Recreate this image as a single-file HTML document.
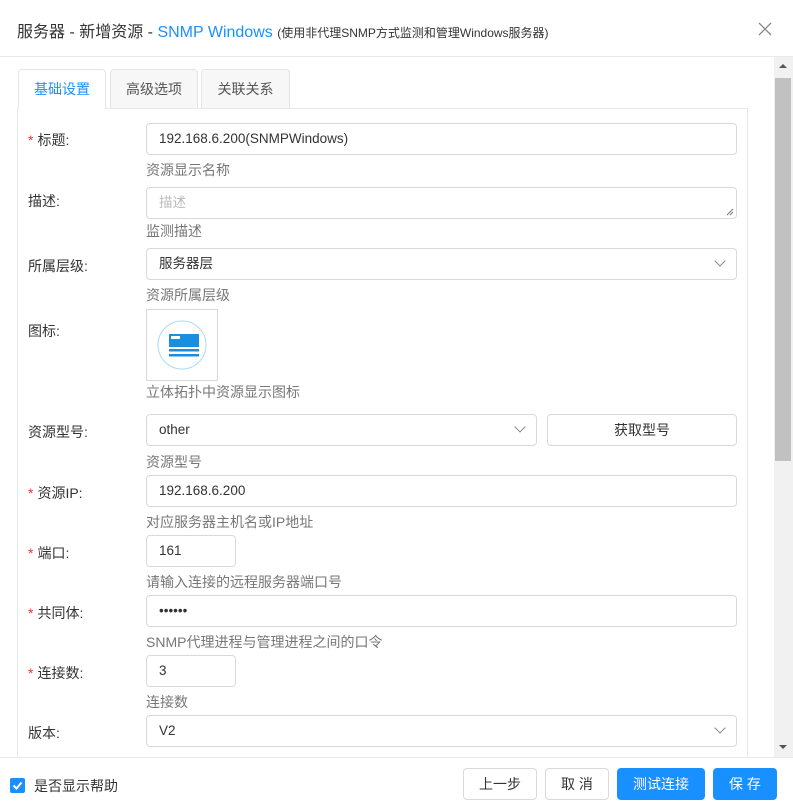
<!DOCTYPE html>
<html><head><meta charset="utf-8"><style>
*{box-sizing:border-box;margin:0;padding:0}
body{width:793px;height:805px;overflow:hidden;background:#fff;font-family:"Liberation Sans","Noto Sans CJK SC",sans-serif;font-size:14px;color:#333;position:relative}
.abs{position:absolute}
.hdr{left:0;top:0;width:793px;height:57px;border-bottom:1px solid #e8e8e8}
.panel{left:17px;top:108px;width:731px;height:660px;border:1px solid #e8e8e8;border-bottom:none}
.tab{top:69px;height:40px;border:1px solid #e4e4e4;border-bottom:none;border-radius:4px 4px 0 0;background:#f7f7f7;text-align:center;line-height:38px;color:#555}
.tab.on{background:#fff;color:#1890ff;height:40px;z-index:2}
.lbl{left:28px;color:#333}
.lbl b{color:#e33;font-weight:normal;margin-right:4px}
.inp{left:146px;width:591px;height:32px;border:1px solid #d9d9d9;border-radius:4px;padding-left:12px;line-height:30px;background:#fff;font-size:13.5px}
.help{left:146px;color:#777}
.arr{position:absolute;right:12px;top:8px;width:8px;height:8px;border-right:1px solid #888;border-bottom:1px solid #888;transform:rotate(45deg)}
.btn{top:768px;height:32px;border:1px solid #d9d9d9;border-radius:4px;text-align:center;line-height:30px;background:#fff;color:#333}
.btn.p{background:#1890ff;border-color:#1890ff;color:#fff}
</style></head><body>
<div class="abs hdr"></div>
<div class="abs" style="left:17px;top:18px;font-size:16px;color:#333">服务器 - 新增资源 - <span style="color:#1890ff">SNMP Windows</span> <span style="font-size:12px">(使用非代理SNMP方式监测和管理Windows服务器)</span></div>
<svg class="abs" style="left:758px;top:22px" width="14" height="14"><path d="M1 1L13 13M13 1L1 13" stroke="#888" stroke-width="1.3"/></svg>

<div class="abs tab on" style="left:18px;width:88px">基础设置</div>
<div class="abs tab" style="left:110px;width:88px">高级选项</div>
<div class="abs tab" style="left:201px;width:89px">关联关系</div>
<div class="abs panel"></div>

<div class="abs lbl" style="top:130px"><b>*</b>标题:</div>
<div class="abs inp" style="top:123px">192.168.6.200(SNMPWindows)</div>
<div class="abs help" style="top:160px">资源显示名称</div>

<div class="abs lbl" style="top:191px">描述:</div>
<div class="abs inp" style="top:187px;color:#bbb">描述<svg style="position:absolute;right:2px;bottom:2px" width="8" height="8"><path d="M7 1L1 7M7 4L4 7" stroke="#777"/></svg></div>
<div class="abs help" style="top:221px">监测描述</div>

<div class="abs lbl" style="top:256px">所属层级:</div>
<div class="abs inp" style="top:248px">服务器层<span class="arr"></span></div>
<div class="abs help" style="top:285px">资源所属层级</div>

<div class="abs lbl" style="top:321px">图标:</div>
<div class="abs" style="left:146px;top:309px;width:72px;height:72px;border:1px solid #d9d9d9">
<svg width="70" height="70" viewBox="0 0 70 70"><circle cx="35" cy="35" r="24" fill="none" stroke="#a8dcf5" stroke-width="1"/><rect x="22" y="24" width="30" height="13" fill="#1a8fe0"/><rect x="24" y="26" width="9" height="3" fill="#fff"/><rect x="22" y="39" width="30" height="2.5" fill="#1a8fe0"/><rect x="22" y="44" width="30" height="2.5" fill="#1a8fe0"/></svg></div>
<div class="abs help" style="top:382px">立体拓扑中资源显示图标</div>

<div class="abs lbl" style="top:422px">资源型号:</div>
<div class="abs inp" style="top:414px;width:391px">other<span class="arr"></span></div>
<div class="abs" style="left:547px;top:414px;width:190px;height:32px;border:1px solid #d9d9d9;border-radius:4px;text-align:center;line-height:30px">获取型号</div>
<div class="abs help" style="top:452px">资源型号</div>

<div class="abs lbl" style="top:483px"><b>*</b>资源IP:</div>
<div class="abs inp" style="top:475px">192.168.6.200</div>
<div class="abs help" style="top:512px">对应服务器主机名或IP地址</div>

<div class="abs lbl" style="top:543px"><b>*</b>端口:</div>
<div class="abs inp" style="top:535px;width:90px">161</div>
<div class="abs help" style="top:572px">请输入连接的远程服务器端口号</div>

<div class="abs lbl" style="top:603px"><b>*</b>共同体:</div>
<div class="abs inp" style="top:595px">••••••</div>
<div class="abs help" style="top:632px">SNMP代理进程与管理进程之间的口令</div>

<div class="abs lbl" style="top:663px"><b>*</b>连接数:</div>
<div class="abs inp" style="top:655px;width:90px">3</div>
<div class="abs help" style="top:692px">连接数</div>

<div class="abs lbl" style="top:723px">版本:</div>
<div class="abs inp" style="top:715px">V2<span class="arr"></span></div>

<div class="abs" style="left:774px;top:57px;width:19px;height:700px;background:#f1f1f1"></div>
<div class="abs" style="left:775px;top:78px;width:16px;height:383px;background:#c1c1c1"></div>
<div class="abs" style="left:779px;top:64px;width:0;height:0;border:4px solid transparent;border-bottom-color:#555;border-top:none"></div>
<div class="abs" style="left:779px;top:745px;width:0;height:0;border:4px solid transparent;border-top-color:#555;border-bottom:none"></div>

<div class="abs" style="left:0;top:757px;width:793px;height:48px;background:#fff;border-top:1px solid #e8e8e8"></div>
<div class="abs" style="left:10px;top:778px;width:15px;height:15px;background:#1890ff;border-radius:2px"><svg width="15" height="15"><path d="M3.5 7.5l3 3 5-6" fill="none" stroke="#fff" stroke-width="2"/></svg></div>
<div class="abs" style="left:34px;top:776px">是否显示帮助</div>
<div class="abs btn" style="left:463px;width:74px">上一步</div>
<div class="abs btn" style="left:545px;width:64px">取 消</div>
<div class="abs btn p" style="left:617px;width:88px">测试连接</div>
<div class="abs btn p" style="left:713px;width:64px">保 存</div>
</body></html>
